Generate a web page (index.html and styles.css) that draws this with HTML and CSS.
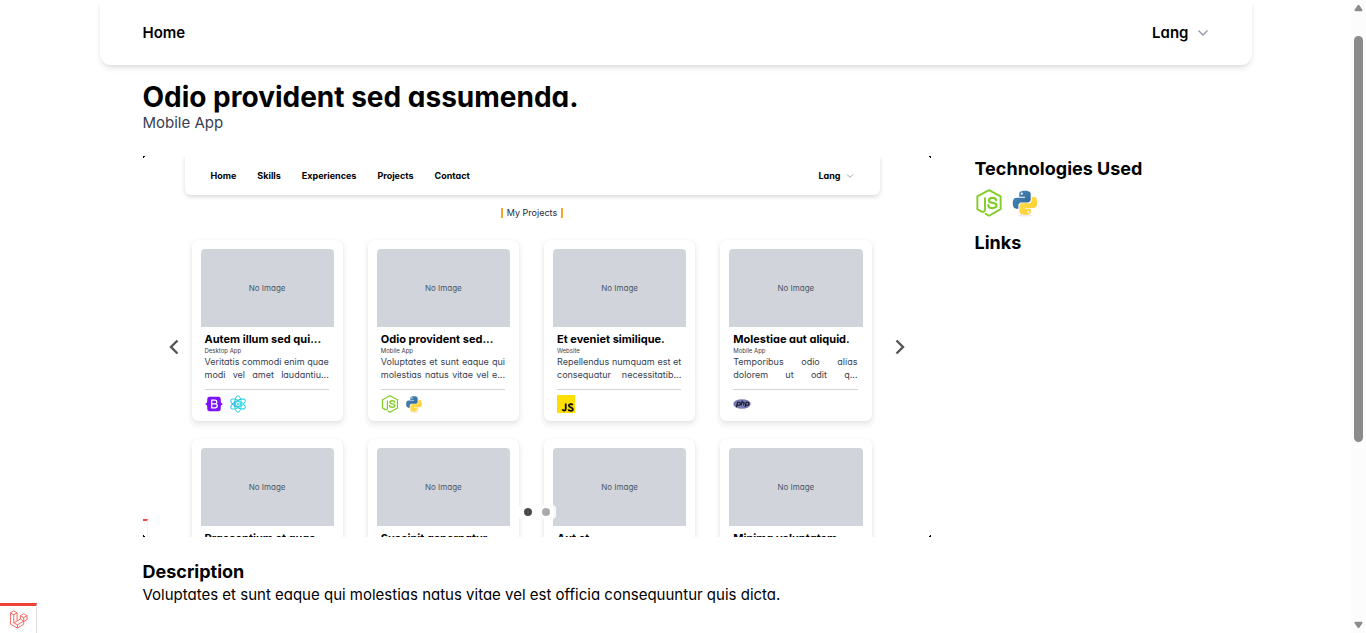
FILE: index.html
```html
<!DOCTYPE html>
<html lang="en">
<head>
<meta charset="utf-8">
<title>Odio provident sed assumenda.</title>
<link rel="stylesheet" href="styles.css">
</head>
<body>
<svg class="sprite" aria-hidden="true">
  <defs>
    <linearGradient id="pyBlue" x1="0" y1="0" x2="1" y2="1"><stop offset="0" stop-color="#4b8bbf"/><stop offset="1" stop-color="#2c628f"/></linearGradient>
    <linearGradient id="pyYellow" x1="0" y1="0" x2="1" y2="1"><stop offset="0" stop-color="#ffe052"/><stop offset="1" stop-color="#ffcb2e"/></linearGradient>
    <linearGradient id="reactTeal" x1="0" y1="0" x2="0" y2="1"><stop offset="0" stop-color="#32deec"/><stop offset="1" stop-color="#18b8d4"/></linearGradient>
  </defs>
  <symbol id="node" viewBox="0 0 32 32" fill="none" stroke="#83cd29" stroke-linejoin="round" stroke-linecap="round">
    <path stroke-width="2.200" d="M12.300 28.400 16 30.600 29.300 23V8.500L16 1.200 2.700 8.500V23l4.400 2.500c2.800 1.400 4.300 0 4.300-2V10.600"/>
    <path stroke-width="2.500" d="M24.200 12.800c-.3-1.700-1.600-2.600-4.200-2.600-2.500 0-4 1-4 2.800 0 2 1.600 2.500 4.200 2.800 3.100.3 4.400 1 4.400 2.900 0 2.100-1.600 3.100-4.600 3.100-3.200 0-4.700-1.200-4.800-3.300"/>
  </symbol>
  <symbol id="python" viewBox="0 0 32 32">
    <ellipse cx="16" cy="30.2" rx="8" ry="1.3" fill="#ddd" opacity=".6"/>
    <path fill="url(#pyBlue)" d="M15.900 2C9.500 2 9.400 4.700 9.400 5.800v3h6.700v1.100H6.400S2 9.400 2 16.100s3.900 6.400 3.900 6.400h2.500v-3.200s-.2-3.900 3.800-3.900h6.600s3.700.1 3.700-3.600V5.700S23 2 15.900 2zm-3.600 2.100a1.200 1.200 0 1 1 0 2.400 1.200 1.200 0 0 1 0-2.400z"/>
    <path fill="url(#pyYellow)" d="M16.100 29.500c6.400 0 6.500-2.700 6.500-3.800v-3h-6.700v-1.100h9.700s4.400.5 4.400-6.200-3.900-6.400-3.900-6.400h-2.500v3.200s.2 3.900-3.800 3.900h-6.600s-3.700-.1-3.700 3.600v6.100s-.5 3.700 6.600 3.700zm3.600-2.100a1.200 1.200 0 1 1 0-2.400 1.200 1.200 0 0 1 0 2.400z"/>
  </symbol>
  <symbol id="bootstrap" viewBox="0 0 32 32">
    <path fill="#7a13f7" d="M8 3h16c3 0 4 2 4 5 0 4 0 6 3 7v2c-3 1-3 3-3 7 0 3-1 5-4 5H8c-3 0-4-2-4-5 0-4 0-6-3-7v-2c3-1 3-3 3-7 0-3 1-5 4-5z"/>
    <path fill="none" stroke="#fff" stroke-width="2.2" d="M12 9h5.500c4.600 0 4.600 6.600 0 6.600H12h6c5 0 5 7.400 0 7.400h-6z"/>
  </symbol>
  <symbol id="react" viewBox="0 0 32 32" fill="none" stroke="url(#reactTeal)" stroke-width="1.7">
    <ellipse cx="16" cy="16" rx="14.5" ry="6" transform="rotate(30 16 16)"/>
    <ellipse cx="16" cy="16" rx="14.5" ry="6" transform="rotate(90 16 16)"/>
    <ellipse cx="16" cy="16" rx="14.5" ry="6" transform="rotate(150 16 16)"/>
    <circle cx="16" cy="16" r="4.6"/><circle cx="16" cy="16" r="1.5"/>
  </symbol>
  <symbol id="js" viewBox="0 0 32 32">
    <path fill="#ffdf00" d="M0 0h32v32H0z"/>
    <path fill="none" stroke="#111" stroke-width="3.2" d="M15.500 15v9.500c0 4-4.500 4-5.800.8M28 18c-1.500-3-7-2.500-7 .8 0 3.700 7.300 2.500 7.300 6.500 0 3.800-6.800 3.800-8.300.2"/>
  </symbol>
  <symbol id="php" viewBox="0 0 32 32">
    <ellipse cx="16" cy="16" rx="15.5" ry="8.5" fill="#777bb3"/>
    <path fill="none" stroke="#15151f" stroke-width="1.9" d="M6 21.500 8 13h3c3 0 2.500 5.300-1 5.300H7M14.500 18.500l2-8.500M16 13h2.500c1.500 0 1.500 1 1 2.500l-.8 3M21.500 21.500l2-8.500h3c3 0 2.500 5.300-1 5.300h-3"/>
  </symbol>
  <symbol id="chevron" viewBox="0 0 12 12" fill="none" stroke="#9096a3" stroke-width="1.3"><path d="m1.500 3.500 4.500 4.500 4.500-4.500"/></symbol>
</svg>

<div class="page">
  <header class="topbar">
    <a href="#" class="toplink">Home</a>
    <button type="button" class="lang">Lang <svg class="chev"><use href="#chevron"/></svg></button>
  </header>

  <main class="content">
    <h1>Odio provident sed assumenda.</h1>
    <p class="kind">Mobile App</p>

    <div class="columns">
      <section class="slider" aria-label="Screenshots">
        <div class="slide">
          <div class="mini-bar">
            <nav class="mini-nav"><span>Home</span><span>Skills</span><span>Experiences</span><span>Projects</span><span>Contact</span></nav>
            <span class="mini-lang">Lang <svg class="mini-chev"><use href="#chevron"/></svg></span>
          </div>
          <div class="mini-title"><span>My Projects</span></div>
          <div class="cards">
            <article class="card"><div class="thumb">No Image</div><div class="body"><h3>Autem illum sed qui...</h3><p class="type">Desktop App</p><p class="text">Veritatis commodi enim quae<br>modi vel amet laudantiu...</p><div class="icons"><svg><use href="#bootstrap"/></svg><svg><use href="#react"/></svg></div></div></article>
            <article class="card"><div class="thumb">No Image</div><div class="body"><h3>Odio provident sed...</h3><p class="type">Mobile App</p><p class="text">Voluptates et sunt eaque qui<br>molestias natus vitae vel e...</p><div class="icons"><svg><use href="#node"/></svg><svg><use href="#python"/></svg></div></div></article>
            <article class="card"><div class="thumb">No Image</div><div class="body"><h3>Et eveniet similique.</h3><p class="type">Website</p><p class="text">Repellendus numquam est et<br>consequatur necessitatib...</p><div class="icons"><svg><use href="#js"/></svg></div></div></article>
            <article class="card"><div class="thumb">No Image</div><div class="body"><h3>Molestiae aut aliquid.</h3><p class="type">Mobile App</p><p class="text">Temporibus odio alias<br>dolorem ut odit q...</p><div class="icons"><svg><use href="#php"/></svg></div></div></article>
            <article class="card"><div class="thumb">No Image</div><div class="body"><h3>Praesentium et quas...</h3></div></article>
            <article class="card"><div class="thumb">No Image</div><div class="body"><h3>Suscipit aspernatur...</h3></div></article>
            <article class="card"><div class="thumb">No Image</div><div class="body"><h3>Aut et.</h3></div></article>
            <article class="card"><div class="thumb">No Image</div><div class="body"><h3>Minima voluptatem...</h3></div></article>
          </div>
        </div>
        <i class="corner tl"></i><i class="corner tr"></i><i class="corner bl"></i><i class="corner br"></i><i class="mini-debug"></i>
        <button type="button" class="arrow prev" aria-label="Previous"><svg viewBox="0 0 10 16"><path d="M8.500 1.500 2 8l6.500 6.500"/></svg></button>
        <button type="button" class="arrow next" aria-label="Next"><svg viewBox="0 0 10 16"><path d="M1.500 1.500 8 8l-6.500 6.500"/></svg></button>
        <div class="dots"><button type="button" class="dot active" aria-label="Slide 1"></button><button type="button" class="dot" aria-label="Slide 2"></button></div>
      </section>

      <aside class="side">
        <h2>Technologies Used</h2>
        <div class="tech"><svg><use href="#node"/></svg><svg><use href="#python"/></svg></div>
        <h2>Links</h2>
      </aside>
    </div>

    <section class="description">
      <h2>Description</h2>
      <p>Voluptates et sunt eaque qui molestias natus vitae vel est officia consequuntur quis dicta.</p>
    </section>
  </main>
</div>

<button type="button" class="debugbar" aria-label="Debug bar">
  <svg viewBox="0 0 20 20"><path d="M1.500 3 5 1l3.500 2v8.500L12 9.500V6l3.500-2L19 6v4l-3.500 2v3L9 19l-7.500-4zM1.500 3 5 5l3.500-2M5 5v8.500l4 2 6.500-3.800M5 13.500l3.500-2M9 15.500V19M12 6l3.500 2L19 6M15.500 8v4L12 9.500"/></svg>
</button>

<div class="scrollbar" aria-hidden="true">
  <svg viewBox="0 0 10 8"><path d="M5 .5c.6 0 1 .5 1.300 1L9.300 6c.4.8 0 1.500-.8 1.500h-7C.7 7.500.3 6.800.7 6l3-4.500C4 1 4.400.5 5 .5z"/></svg>
  <div class="thumb-bar"></div>
  <svg class="down" viewBox="0 0 10 8"><path d="M5 7.500c.6 0 1-.5 1.300-1L9.300 2c.4-.8 0-1.500-.8-1.500h-7C.7.5.3 1.200.7 2l3 4.500c.3.5.7 1 1.300 1z"/></svg>
</div>
</body>
</html>
```
FILE: styles.css
```css
* { box-sizing: border-box; margin: 0; padding: 0; }
body { font-family: Inter, "Open Sans", sans-serif; font-feature-settings: "cv11"; font-size: 15px; line-height: 22px; color: #000; background: #fff; }
button { font: inherit; font-feature-settings: inherit; color: inherit; background: none; border: 0; cursor: pointer; }
a { color: inherit; text-decoration: none; }
svg { display: block; }
.sprite { position: absolute; width: 0; height: 0; }

.page { padding-right: 15px; }
.topbar { max-width: 1152px; height: 65px; margin: 0 auto; padding: 0 43px; display: flex; align-items: center; justify-content: space-between; font-weight: 600; border-radius: 0 0 11px 11px; box-shadow: 0 4px 6px -1px rgba(0, 0, 0, .1), 0 2px 4px -2px rgba(0, 0, 0, .1); }
.lang { display: flex; align-items: center; gap: 8px; }
.chev { width: 12px; height: 12px; }

.content { max-width: 1152px; margin: 0 auto; padding: 16px 43px 28px; }
h1 { font-size: 28px; line-height: 32px; font-weight: 700; }
.kind { line-height: 20px; color: #374151; }
h2 { font-size: 18px; line-height: 24px; font-weight: 700; }

.columns { display: grid; grid-template-columns: minmax(0, 788fr) 234fr; gap: 44px; margin-top: 23px; }
.slider { position: relative; overflow: hidden; }
.slide { height: 381px; padding: 0 51px 0 42px; }
.mini-bar { height: 39px; padding: 0 26px; display: flex; align-items: center; justify-content: space-between; font-size: 9px; line-height: 12px; font-weight: 700; border-radius: 0 0 6px 6px; box-shadow: 0 2px 4px rgba(0, 0, 0, .15); }
.mini-nav { display: flex; gap: 21px; }
.mini-lang { display: flex; align-items: center; gap: 5px; }
.mini-chev { width: 8px; height: 8px; }
.mini-title { display: flex; justify-content: center; padding: 13px 0 22px; }
.mini-title span { border: solid #f5a52b; border-width: 0 2px; padding: 0 4px; font-size: 9px; line-height: 10px; color: #1f2937; }
.cards { display: grid; grid-template-columns: repeat(4, minmax(0, 1fr)); gap: 18px 25px; padding: 0 8px 0 7px; }
.card { height: 181px; padding: 9px; border-radius: 6px; box-shadow: 0 3px 6px rgba(0, 0, 0, .11), 0 0 1px rgba(0, 0, 0, .1); }
.thumb { height: 78px; display: flex; align-items: center; justify-content: center; border-radius: 4px 4px 0 0; background: #d1d5db; color: #4b5563; font-size: 8px; line-height: 12px; }
.body { padding: 4px 5px 0 4px; }
.card h3 { font-size: 11px; line-height: 16px; font-weight: 700; white-space: nowrap; }
.type { font-size: 6px; line-height: 8px; color: #374151; }
.text { font-size: 9px; line-height: 13px; color: #374151; text-align: justify; text-align-last: justify; white-space: nowrap; }
.icons { display: flex; align-items: center; gap: 6px; margin-top: 8px; padding-top: 5px; border-top: 1px solid #d1d5db; }
.icons svg { width: 18px; height: 18px; }

.corner { position: absolute; width: 2px; height: 2px; }
.tl { top: 0; left: 0; border: solid #000; border-width: 1px 0 0 1px; }
.tr { top: 0; right: 0; border: solid #000; border-width: 1px 1px 0 0; }
.bl { bottom: 0; left: 0; border: solid #000; border-width: 0 0 1px 1px; }
.br { bottom: 0; right: 0; border: solid #000; border-width: 0 1px 1px 0; }
.mini-debug { position: absolute; left: 0; bottom: 0; width: 5px; height: 18px; border-top: 2px solid #ef4f43; border-right: 1px solid #f3f3f3; }
.arrow { position: absolute; top: 50%; transform: translateY(-50%); padding: 4px; }
.arrow svg { width: 10px; height: 16px; fill: none; stroke: #555; stroke-width: 2.4; }
.prev { left: 22px; }
.next { right: 22px; }
.dots { position: absolute; left: 50%; bottom: 18px; transform: translateX(-50%); display: flex; gap: 10px; padding: 3px 6px; border-radius: 4px; background: rgba(255, 255, 255, .85); }
.dot { width: 8px; height: 8px; border-radius: 50%; background: #aaa; }
.dot.active { background: #4b4b4b; }

.side { padding-top: 1px; }
.tech { display: flex; gap: 8px; margin: 8px 0 14px; }
.tech svg { width: 28px; height: 28px; }
.description { margin-top: 23px; }

.debugbar { position: fixed; left: 0; bottom: 0; width: 37px; height: 30px; border-top: 3px solid #ee4035; border-right: 1px solid #ddd; background: #fff; padding-left: 9px; }
.debugbar svg { width: 19px; height: 19px; fill: none; stroke: #f4645f; stroke-width: 1; }
.scrollbar { position: fixed; top: 0; right: 0; bottom: 0; width: 15px; padding: 4px 3px; display: flex; flex-direction: column; background: #fcfcfc; }
.scrollbar svg { width: 9px; height: 8px; fill: #8b8b8b; flex: none; }
.thumb-bar { height: 65%; width: 9px; margin-top: 24px; border-radius: 5px; background: #8b8b8b; }
.scrollbar .down { margin-top: auto; }
```
